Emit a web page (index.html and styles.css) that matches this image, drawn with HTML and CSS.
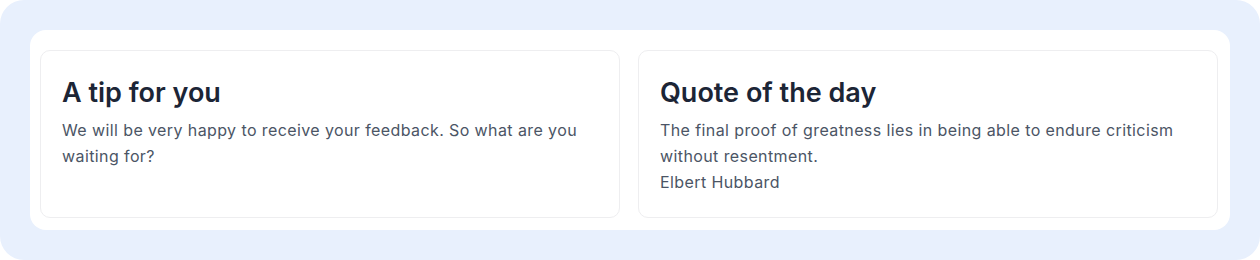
FILE: index.html
```html
<!DOCTYPE html>
<html lang="en">
<head>
  <meta charset="UTF-8" />
  <meta name="viewport" content="width=device-width, initial-scale=1.0"/>
  <title>Tips</title>
  <link rel="stylesheet" href="styles.css">
</head>
<body>

<div id="wrap">
  <div id="panel">
    <div class="card">
      <h2>A tip for you</h2>
      <p>We will be very happy to receive your feedback. So what are you waiting for?</p>
    </div>
    <div class="card">
      <h2>Quote of the day</h2>
      <p>The final proof of greatness lies in being able to endure criticism without resentment.</p>
      <p>Elbert Hubbard</p>
    </div>
  </div>
</div>

</body>
</html>
```

FILE: styles.css
```css
body {
  font-family: Inter, "Noto Sans", sans-serif;
  margin: 0;
  padding: 0;
}

#wrap {
  background: #e8f0fd;
  border-radius: 24px;
  padding: 30px;
  height: 260px;
  box-sizing: border-box;
}

#panel {
  background: white;
  border-radius: 16px;
  padding: 20px 12px 12px 10px;
  display: grid;
  grid-template-columns: 1fr 1fr;
  gap: 18px;
}

.card {
  border: 1px solid #eeeef0;
  border-radius: 10px;
  padding: 24px 21px;
  height: 168px;
  box-sizing: border-box;
}

.card h2 {
  margin: 0 0 6px;
  font-size: 27px;
  font-weight: 600;
  color: #1c2536;
  line-height: 36px;
}

.card p {
  margin: 0;
  font-size: 16px;
  letter-spacing: 0.4px;
  line-height: 26px;
  color: #4b5565;
}
```
